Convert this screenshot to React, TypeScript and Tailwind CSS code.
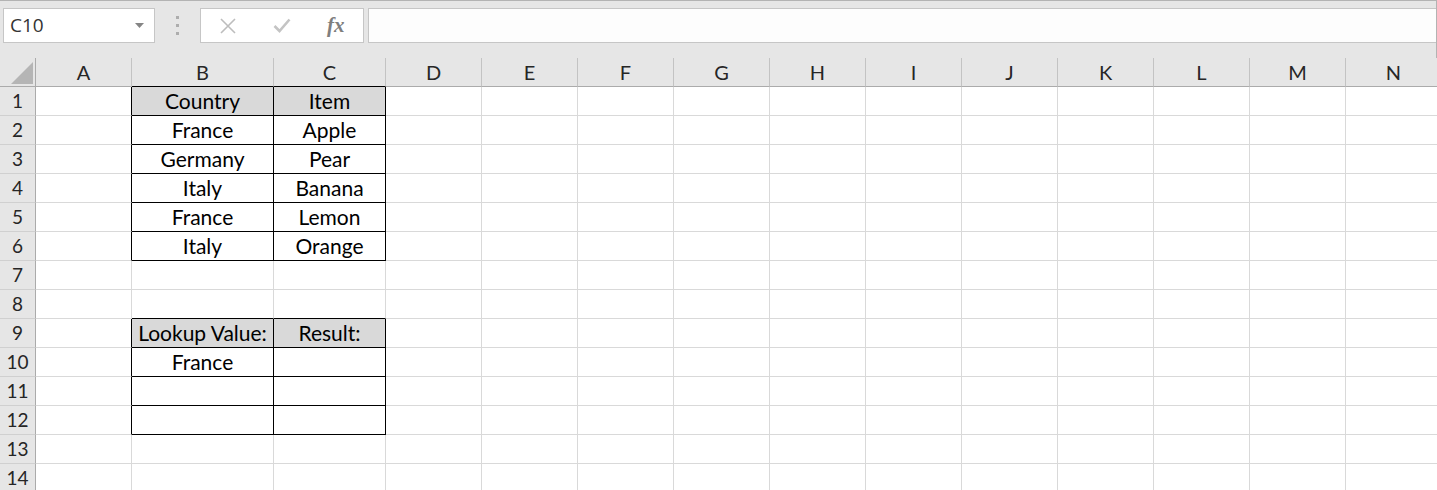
const COLS = ["A", "B", "C", "D", "E", "F", "G", "H", "I", "J", "K", "L", "M", "N"];
const WIDTHS = [96, 142, 112, 96, 96, 96, 96, 96, 96, 96, 96, 96, 96, 96];

const DATA: Record<string, string> = {
  "1-1": "Country",
  "1-2": "Item",
  "2-1": "France",
  "2-2": "Apple",
  "3-1": "Germany",
  "3-2": "Pear",
  "4-1": "Italy",
  "4-2": "Banana",
  "5-1": "France",
  "5-2": "Lemon",
  "6-1": "Italy",
  "6-2": "Orange",
  "9-1": "Lookup Value:",
  "9-2": "Result:",
  "10-1": "France",
};

const inTable = (r: number, c: number) =>
  (c === 1 || c === 2) && ((r >= 1 && r <= 6) || (r >= 9 && r <= 12));

const isHead = (r: number, c: number) => (r === 1 || r === 9) && (c === 1 || c === 2);

const cellFont = { fontFamily: "Lato, 'Liberation Sans', sans-serif" };

function FormulaBar() {
  return (
    <div className="flex h-[58px] items-start border-t border-r border-[#b3b3b3] bg-[#e6e6e6] pt-[7px]">
      <div className="ml-[3px] flex h-[35px] w-[152px] items-center justify-between border border-[#c6c6c6] bg-white pl-[6px] pr-[10px]">
        <span className="text-[19px] text-[#333]" style={{ fontFamily: "'Open Sans', sans-serif" }}>
          C10
        </span>
        <svg width="9" height="5" viewBox="0 0 9 5">
          <path d="M0 0 L9 0 L4.5 5 Z" fill="#858585" />
        </svg>
      </div>
      <div className="flex h-[35px] w-[45px] flex-col items-center justify-center gap-[5px]">
        <div className="h-[3px] w-[3px] bg-[#adadad]" />
        <div className="h-[3px] w-[3px] bg-[#adadad]" />
        <div className="h-[3px] w-[3px] bg-[#adadad]" />
      </div>
      <div className="flex h-[35px] w-[164px] items-center border border-[#c6c6c6] bg-white">
        <div className="flex w-[54px] justify-center">
          <svg width="16" height="16" viewBox="0 0 16 16">
            <path d="M1 1 L15 15 M15 1 L1 15" stroke="#bdbdbd" strokeWidth="1.6" fill="none" />
          </svg>
        </div>
        <div className="flex w-[55px] justify-center">
          <svg width="18" height="15" viewBox="0 0 18 15">
            <path d="M1.5 8 L6.5 13 L16.5 1.5" stroke="#c4c4c4" strokeWidth="2.6" fill="none" />
          </svg>
        </div>
        <div className="flex w-[55px] justify-center">
          <span
            className="text-[21px] font-bold italic leading-none text-[#7f7f7f]"
            style={{ fontFamily: "'Liberation Serif', serif" }}
          >
            fx
          </span>
        </div>
      </div>
      <div className="ml-[4px] h-[35px] flex-1 border border-r-0 border-[#c6c6c6] bg-[#fdfdfd]" />
    </div>
  );
}

function HeaderRow() {
  return (
    <div className="flex h-[29px] bg-[#e6e6e6]">
      <div className="relative h-[29px] w-[36px] shrink-0 border-r border-b border-[#ababab]">
        <svg className="absolute left-[11px] top-[4px]" width="22" height="22" viewBox="0 0 22 22">
          <path d="M22 0 L22 22 L0 22 Z" fill="#b5b5b5" />
        </svg>
      </div>
      {COLS.map((col, c) => (
        <div
          key={col}
          style={{ width: WIDTHS[c], ...cellFont }}
          className={
            "flex h-[29px] shrink-0 items-center justify-center border-r border-b border-r-[#c3c3c3] text-[20px] text-[#262626] " +
            (inTable(1, c) ? "border-b-black" : "border-b-[#ababab]")
          }
        >
          {col}
        </div>
      ))}
    </div>
  );
}

function Row({ r }: { r: number }) {
  return (
    <div className="flex h-[29px]">
      <div
        style={cellFont}
        className="flex h-[29px] w-[36px] shrink-0 items-center justify-center border-r border-b border-r-[#ababab] border-b-[#d0d0d0] bg-[#e6e6e6] text-[19px] text-[#262626]"
      >
        {r}
      </div>
      {COLS.map((col, c) => {
        const rightBlack = inTable(r, c) || inTable(r, c + 1);
        const bottomBlack = inTable(r, c) || inTable(r + 1, c);
        return (
          <div
            key={col}
            style={{ width: WIDTHS[c], ...cellFont }}
            className={
              "flex h-[29px] shrink-0 items-center justify-center border-r border-b text-[21px] text-black " +
              (rightBlack ? "border-r-black " : "border-r-[#d9d9d9] ") +
              (bottomBlack ? "border-b-black " : "border-b-[#d9d9d9] ") +
              (isHead(r, c) ? "bg-[#d9d9d9]" : "bg-white")
            }
          >
            {DATA[`${r}-${c}`] ?? ""}
          </div>
        );
      })}
    </div>
  );
}

export default function App() {
  return (
    <div className="h-[490px] w-[1437px] overflow-hidden bg-white">
      <FormulaBar />
      <HeaderRow />
      {Array.from({ length: 14 }, (_, i) => (
        <Row key={i + 1} r={i + 1} />
      ))}
    </div>
  );
}
